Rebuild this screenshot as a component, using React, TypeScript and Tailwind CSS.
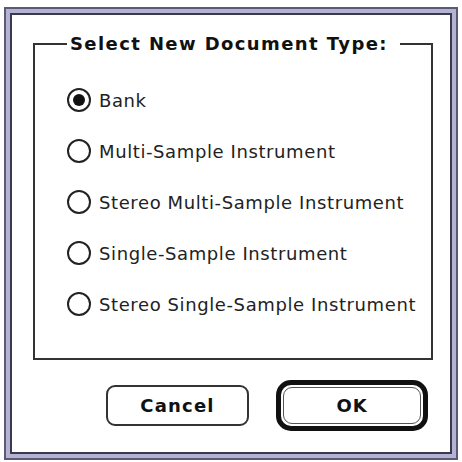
const options = [
  "Bank",
  "Multi-Sample Instrument",
  "Stereo Multi-Sample Instrument",
  "Single-Sample Instrument",
  "Stereo Single-Sample Instrument",
];

function Radio({ checked }: { checked: boolean }) {
  return (
    <span className="w-[24px] h-[24px] rounded-full border-2 border-[#222] bg-white flex items-center justify-center shrink-0">
      {checked && <span className="w-[12px] h-[12px] rounded-full bg-[#111]" />}
    </span>
  );
}

export default function App() {
  const selected = 0;

  return (
    <div className="w-[462px] h-[462px] bg-white pt-[7px] pl-[4px]" style={{ fontFamily: '"DejaVu Sans", Verdana, sans-serif' }}>
      <div className="w-[454px] h-[453px] border-2 border-[#5a5a78] bg-[#b4b4d2] p-[4px]">
        <div className="w-full h-full border-2 border-[#3a3a4e] bg-white pl-[21px] pt-[19px] flex flex-col">
          <fieldset className="w-[400px] h-[326px] border-2 border-[#333] rounded-none">
            <legend className="ml-[32px] pl-[3px] pr-[12px] text-[18px] font-bold tracking-[1.4px] text-[#111] leading-[20px]">
              Select New Document Type:
            </legend>
            <div className="flex flex-col gap-[27px] pl-[32px] pt-[34px]">
              {options.map((label, i) => (
                <label key={label} className="flex items-center gap-[8px] h-[24px] text-[18px] tracking-[0.6px] text-[#222]">
                  <Radio checked={i === selected} />
                  <span>{label}</span>
                </label>
              ))}
            </div>
          </fieldset>

          <div className="flex items-center justify-end gap-[27px] mt-[20px] pr-[22px]">
            <button className="w-[143px] h-[41px] border-2 border-[#333] rounded-[9px] bg-white text-[18px] font-bold tracking-[1.2px] text-[#111]">
              Cancel
            </button>
            <div className="w-[152px] h-[51px] border-[5px] border-[#111] rounded-[15px] bg-white p-[2px]">
              <button className="w-full h-full border border-[#555] rounded-[9px] bg-white text-[18px] font-bold tracking-[1px] text-[#111]">
                OK
              </button>
            </div>
          </div>
        </div>
      </div>
    </div>
  );
}
